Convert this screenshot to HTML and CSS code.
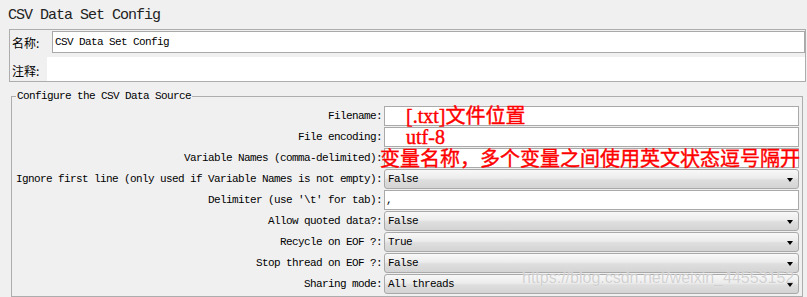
FILE: index.html
```html
<!DOCTYPE html>
<html lang="zh">
<head>
    <meta charset="UTF-8">
    <meta name="viewport" content="width=device-width, initial-scale=1.0">
    <title>CSV Data Set Config</title>
    <link rel="stylesheet" href="styles.css">
</head>
<body>
    <!-- Titre du composant -->
    <div class="title">CSV Data Set Config</div>

    <!-- Nom et commentaire -->
    <div class="name-panel">
        <div class="name-row">
            <span class="cn-label name-label">名称:</span>
            <div class="text-field name-field">CSV Data Set Config</div>
        </div>
        <div class="comment-row">
            <span class="cn-label comment-label">注释:</span>
            <div class="comment-area"></div>
        </div>
    </div>

    <!-- Source CSV -->
    <fieldset class="source">
        <legend>Configure the CSV Data Source</legend>
        <div class="form-grid">
            <label>Filename:</label>
            <div class="text-field"><span class="note">[.txt]文件位置</span></div>

            <label>File encoding:</label>
            <div class="text-field"><span class="note">utf-8</span></div>

            <label>Variable Names (comma-delimited):</label>
            <div class="text-field"><span class="note note-wide">变量名称，多个变量之间使用英文状态逗号隔开</span></div>

            <label>Ignore first line (only used if Variable Names is not empty):</label>
            <div class="select"><span>False</span><span class="arrow"></span></div>

            <label>Delimiter (use '\t' for tab):</label>
            <div class="text-field">,</div>

            <label>Allow quoted data?:</label>
            <div class="select"><span>False</span><span class="arrow"></span></div>

            <label>Recycle on EOF ?:</label>
            <div class="select"><span>True</span><span class="arrow"></span></div>

            <label>Stop thread on EOF ?:</label>
            <div class="select"><span>False</span><span class="arrow"></span></div>

            <label>Sharing mode:</label>
            <div class="select"><span>All threads</span><span class="arrow"></span></div>
        </div>
    </fieldset>

    <!-- Filigrane -->
    <div class="watermark">https://blog.csdn.net/weixin_44553152</div>
</body>
</html>
```

FILE: styles.css
```css
/* Page */
body {
    margin: 0;
    width: 807px;
    height: 297px;
    overflow: hidden;
    position: relative;
    background-color: #f0f0f0;
    font-family: "Liberation Mono", "Noto Sans CJK SC", monospace;
    font-size: 11px;
    letter-spacing: -0.6px;
    color: #000;
}

/* Titre */
.title {
    height: 29px;
    box-sizing: border-box;
    padding: 7px 0 0 8px;
    font-size: 15px;
    line-height: 17px;
    letter-spacing: -1px;
    color: #222;
}

/* Panneau nom / commentaire */
.name-panel {
    margin: 0 1px 0 9px;
    border: 1px solid #adadad;
}

.name-row {
    display: flex;
    align-items: center;
    height: 22px;
    margin-top: 1px;
    padding-left: 2px;
}

.cn-label {
    font-family: "Noto Sans CJK SC", sans-serif;
    font-size: 12px;
    letter-spacing: 0;
}

.name-label {
    width: 40px;
}

.comment-row {
    display: flex;
    align-items: center;
    height: 24px;
    margin-top: 4px;
    padding-left: 2px;
}

.comment-label {
    width: 35px;
    padding-top: 3px;
}

.comment-area {
    flex: 1;
    align-self: stretch;
    background-color: #fff;
}

/* Champs texte */
.text-field {
    height: 20px;
    box-sizing: border-box;
    display: flex;
    align-items: center;
    padding-left: 1px;
    background-color: #fff;
    border: 1px solid #a9a9a9;
    white-space: nowrap;
}

.name-field {
    flex: 1;
    height: 22px;
    padding-left: 2px;
}

/* Cadre de la source */
.source {
    margin: 8px 4px 0 11px;
    padding: 4px 3px 2px 4px;
    border: 1px solid #adadad;
    min-width: 0;
}

.source legend {
    padding: 0 1px;
    line-height: 12px;
}

.form-grid {
    display: grid;
    grid-template-columns: 366px 415px;
    column-gap: 2px;
    row-gap: 1px;
}

.form-grid label {
    text-align: right;
    line-height: 20px;
    white-space: nowrap;
}

/* Annotations rouges */
.note {
    margin-left: 20px;
    color: #f00;
    font-family: "Liberation Serif", "Noto Sans CJK SC", serif;
    font-size: 20px;
    line-height: 20px;
    letter-spacing: 0;
    -webkit-text-stroke: 0.4px #f00;
}

.note-wide {
    margin-left: -6px;
    margin-top: 2px;
}

/* Listes déroulantes */
.select {
    height: 20px;
    box-sizing: border-box;
    display: flex;
    align-items: center;
    justify-content: space-between;
    padding: 0 5px 0 3px;
    border: 1px solid #a9a9a9;
    border-radius: 3px;
    background: linear-gradient(to bottom, #f8f8f8 0%, #ececec 45%, #dedede 55%, #d4d4d4 100%);
}

.arrow {
    margin-top: 2px;
    border-left: 3.5px solid transparent;
    border-right: 3.5px solid transparent;
    border-top: 4px solid #000;
}

/* Filigrane */
.watermark {
    position: absolute;
    left: 522px;
    top: 269px;
    font-family: "Liberation Sans", sans-serif;
    font-size: 16px;
    letter-spacing: 0;
    color: rgba(190, 190, 190, 0.7);
    text-shadow: 0 0 1px rgba(255, 255, 255, 0.9);
}
```
